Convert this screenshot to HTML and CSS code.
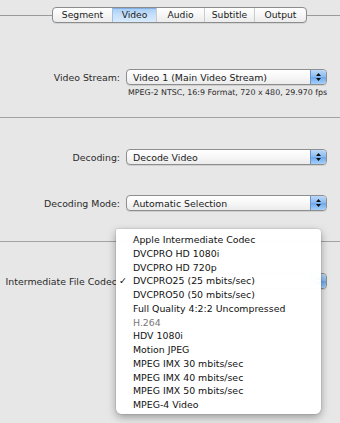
FILE: index.html
```html
<!DOCTYPE html>
<html lang="en">
<head>
    <meta charset="UTF-8">
    <title>Video Settings</title>
    <link rel="stylesheet" href="styles.css">
</head>
<body>
    <!-- Tab selector -->
    <div class="tabbar">
        <div class="rule rule-left"></div>
        <div class="segmented">
            <div class="seg seg-segment">Segment</div>
            <div class="seg seg-video selected">Video</div>
            <div class="seg seg-audio">Audio</div>
            <div class="seg seg-subtitle">Subtitle</div>
            <div class="seg seg-output">Output</div>
        </div>
        <div class="rule rule-right"></div>
    </div>

    <!-- Stream -->
    <div class="section section-stream">
        <div class="row">
            <div class="label">Video Stream:</div>
            <div class="popup">
                <span class="popup-text">Video 1 (Main Video Stream)</span>
                <span class="popup-arrows">
                    <svg width="7" height="10" viewBox="0 0 7 10"><path d="M3.5 1 L6 4 L1 4 Z M3.5 9 L6 6 L1 6 Z" fill="#111"/></svg>
                </span>
            </div>
        </div>
        <div class="info">MPEG-2 NTSC, 16:9 Format, 720 x 480, 29.970 fps</div>
    </div>

    <!-- Decoding -->
    <div class="section section-decoding">
        <div class="row">
            <div class="label">Decoding:</div>
            <div class="popup">
                <span class="popup-text">Decode Video</span>
                <span class="popup-arrows">
                    <svg width="7" height="10" viewBox="0 0 7 10"><path d="M3.5 1 L6 4 L1 4 Z M3.5 9 L6 6 L1 6 Z" fill="#111"/></svg>
                </span>
            </div>
        </div>
        <div class="row">
            <div class="label">Decoding Mode:</div>
            <div class="popup">
                <span class="popup-text">Automatic Selection</span>
                <span class="popup-arrows">
                    <svg width="7" height="10" viewBox="0 0 7 10"><path d="M3.5 1 L6 4 L1 4 Z M3.5 9 L6 6 L1 6 Z" fill="#111"/></svg>
                </span>
            </div>
        </div>
    </div>

    <!-- Intermediate codec -->
    <div class="section section-codec">
        <div class="row">
            <div class="label label-wide"><span>Intermediate File Codec:</span></div>
            <div class="popup">
                <span class="popup-text">DVCPRO25 (25 mbits/sec)</span>
                <span class="popup-arrows">
                    <svg width="7" height="10" viewBox="0 0 7 10"><path d="M3.5 1 L6 4 L1 4 Z M3.5 9 L6 6 L1 6 Z" fill="#111"/></svg>
                </span>
            </div>
        </div>
    </div>

    <!-- Open popup menu -->
    <ul class="menu">
        <li>Apple Intermediate Codec</li>
        <li>DVCPRO HD 1080i</li>
        <li>DVCPRO HD 720p</li>
        <li class="checked"><span class="check">&#10003;</span>DVCPRO25 (25 mbits/sec)</li>
        <li>DVCPRO50 (50 mbits/sec)</li>
        <li>Full Quality 4:2:2 Uncompressed</li>
        <li class="dim">H.264</li>
        <li>HDV 1080i</li>
        <li>Motion JPEG</li>
        <li>MPEG IMX 30 mbits/sec</li>
        <li>MPEG IMX 40 mbits/sec</li>
        <li>MPEG IMX 50 mbits/sec</li>
        <li>MPEG-4 Video</li>
    </ul>
</body>
</html>
```

FILE: styles.css
```css
body {
    margin: 0;
    background: #e7e7e7;
    font-family: "DejaVu Sans", "Lucida Grande", sans-serif;
    font-size: 9.4px;
    color: #2a2a2a;
    width: 340px;
    height: 423px;
    overflow: hidden;
    position: relative;
}
.tabbar {
    display: flex;
    align-items: center;
    padding-top: 7px;
    height: 16px;
}
.rule {
    height: 1px;
    background: #9a9a9a;
}
.rule-left {
    width: 52px;
}
.rule-right {
    flex: 1;
}
.segmented {
    display: flex;
    height: 14px;
    border: 1px solid #8c8c8c;
    border-radius: 4px;
    background: linear-gradient(#ffffff, #f6f6f6 50%, #ececec);
    overflow: hidden;
    box-shadow: 0 1px 0 rgba(0,0,0,0.08);
}
.seg {
    font-size: 9.2px;
    line-height: 14px;
    text-align: center;
    border-left: 1px solid #cccccc;
    color: #1a1a1a;
}
.seg:first-child {
    border-left: none;
}
.seg-segment { width: 59px; }
.seg-video { width: 43px; }
.seg-audio { width: 47px; }
.seg-subtitle { width: 49px; }
.seg-output { width: 51px; }
.seg.selected {
    background: linear-gradient(#5f8fcf 0, #a9cff5 1px, #c7e0fa 50%, #d9ebfc);
    border-left-color: #9dc0e6;
}
.section {
    border-bottom: 1px solid #a3a3a3;
}
.section-stream {
    padding: 46px 0 18px;
}
.section-decoding {
    padding: 31px 0 30px;
    display: flex;
    flex-direction: column;
    gap: 30px;
}
.section-codec {
    padding-top: 31px;
    border-bottom: none;
}
.row {
    display: flex;
    align-items: center;
}
.label {
    width: 120px;
    flex-shrink: 0;
    text-align: right;
    white-space: nowrap;
}
.label-wide {
    display: flex;
    justify-content: flex-end;
}
.popup {
    margin-left: 6px;
    width: 199px;
    height: 14px;
    border: 1px solid #8e8e8e;
    border-radius: 4px;
    background: linear-gradient(#ffffff, #f7f7f7 50%, #ebebeb);
    display: flex;
    align-items: center;
    overflow: hidden;
    box-shadow: 0 1px 0 rgba(0,0,0,0.1);
}
.popup-text {
    flex: 1;
    padding-left: 6px;
    white-space: nowrap;
    color: #1a1a1a;
}
.popup-arrows {
    width: 15px;
    height: 14px;
    display: flex;
    align-items: center;
    justify-content: center;
    border-left: 1px solid #6d93c9;
    background: linear-gradient(#bcd9f8, #89b9ef 50%, #6ba7ec 51%, #a8d0f7);
}
.info {
    margin: 2px 0 0 128px;
    font-size: 7.9px;
    line-height: 12px;
    color: #2a2a2a;
    white-space: nowrap;
}
.menu {
    position: absolute;
    left: 116px;
    top: 229px;
    width: 205px;
    margin: 0;
    padding: 4px 0 2px;
    list-style: none;
    background: rgba(255,255,255,0.98);
    border-radius: 2px 4px 6px 6px;
    box-shadow: 0 3px 8px rgba(0,0,0,0.35), 0 0 0 1px rgba(0,0,0,0.06);
}
.menu li {
    position: relative;
    padding-left: 17px;
    height: 13.75px;
    line-height: 13.75px;
    white-space: nowrap;
    color: #111;
}
.menu li.dim {
    color: #777;
}
.check {
    position: absolute;
    left: 3px;
    top: 0;
}
```
